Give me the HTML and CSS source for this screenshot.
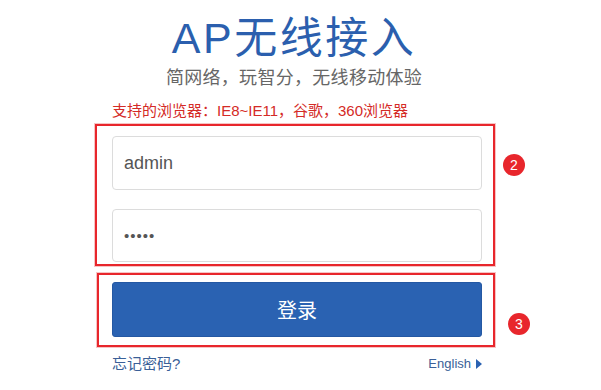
FILE: index.html
```html
<!DOCTYPE html>
<html lang="zh-CN">
<head>
<meta charset="utf-8">
<title>AP无线接入</title>
<link rel="stylesheet" href="styles.css">
</head>
<body>
<div class="page">
  <header class="head">
    <h1 class="title">AP无线接入</h1>
    <p class="subtitle">简网络，玩智分，无线移动体验</p>
  </header>
  <p class="note">支持的浏览器：IE8~IE11，谷歌，360浏览器</p>
  <div class="mark mark-fields">
    <div class="field">admin</div>
    <div class="field field-pass">•••••</div>
    <span class="badge badge-2">2</span>
  </div>
  <div class="mark mark-button">
    <button class="login" type="button">登录</button>
    <span class="badge badge-3">3</span>
  </div>
  <div class="links">
    <a class="forgot">忘记密码?</a>
    <a class="lang">English <svg class="tri" width="6" height="10" viewBox="0 0 6 10"><path d="M0 0 L6 5 L0 10 Z" fill="#2a62b2"/></svg></a>
  </div>
</div>
</body>
</html>
```
FILE: styles.css
```css
html, body {
  margin: 0;
  padding: 0;
  background: #fff;
}
body {
  font-family: "Liberation Sans", "Noto Sans CJK SC", Arial, sans-serif;
  width: 601px;
  height: 390px;
  overflow: hidden;
}
.page {
  display: flex;
  flex-direction: column;
  padding-top: 16px;
}
.head {
  width: 370px;
  margin-left: 109px;
  text-align: center;
}
.title {
  margin: 0;
  font-weight: normal;
  font-size: 43px;
  line-height: 44px;
  color: #2b5fae;
  letter-spacing: 2.5px;
}
.subtitle {
  margin: 6px 0 0;
  font-size: 18px;
  line-height: 24px;
  color: #666;
  letter-spacing: 0.3px;
}
.note {
  margin: 10px 0 0 112px;
  font-size: 15px;
  line-height: 22px;
  color: #d42a26;
}
.mark {
  position: relative;
  border: 2px solid #e8262c;
  box-shadow: 0 0 0 1px #f6c4c4;
  width: 370px;
  display: flex;
  flex-direction: column;
}
.mark-fields {
  margin: 2px 0 0 95px;
  padding: 10px 11px 2px 15px;
  gap: 19px;
}
.mark-button {
  margin: 7px 0 0 97px;
  padding: 7px 11px 8px 13px;
}
.field {
  box-sizing: border-box;
  height: 54px;
  border: 1px solid #dcdcdc;
  border-radius: 4px;
  background: #fff;
  padding-left: 11px;
  display: flex;
  align-items: center;
  font-size: 18px;
  color: #555;
}
.field-pass {
  height: 53px;
  font-size: 15px;
  letter-spacing: 1px;
  color: #555;
}
.login {
  box-sizing: border-box;
  height: 55px;
  width: 100%;
  border: 1px solid #2458a3;
  border-radius: 3px;
  background: #2a62b2;
  color: #fff;
  font-family: "Noto Sans CJK SC", sans-serif;
  font-size: 20px;
  padding: 0;
}
.badge {
  position: absolute;
  width: 22px;
  height: 22px;
  border-radius: 50%;
  background: #e8262c;
  color: #fff;
  font-size: 14px;
  line-height: 22px;
  text-align: center;
}
.badge-2 {
  left: 406px;
  top: 28px;
}
.badge-3 {
  left: 409px;
  top: 38px;
}
.links {
  margin: 7px 0 0 112px;
  width: 370px;
  display: flex;
  justify-content: space-between;
  align-items: center;
  line-height: 20px;
}
.forgot {
  font-size: 15px;
  color: #3a5f98;
}
.lang {
  font-size: 13px;
  color: #3a5f98;
  display: flex;
  align-items: center;
  gap: 5px;
}
.tri {
  display: block;
}
```
